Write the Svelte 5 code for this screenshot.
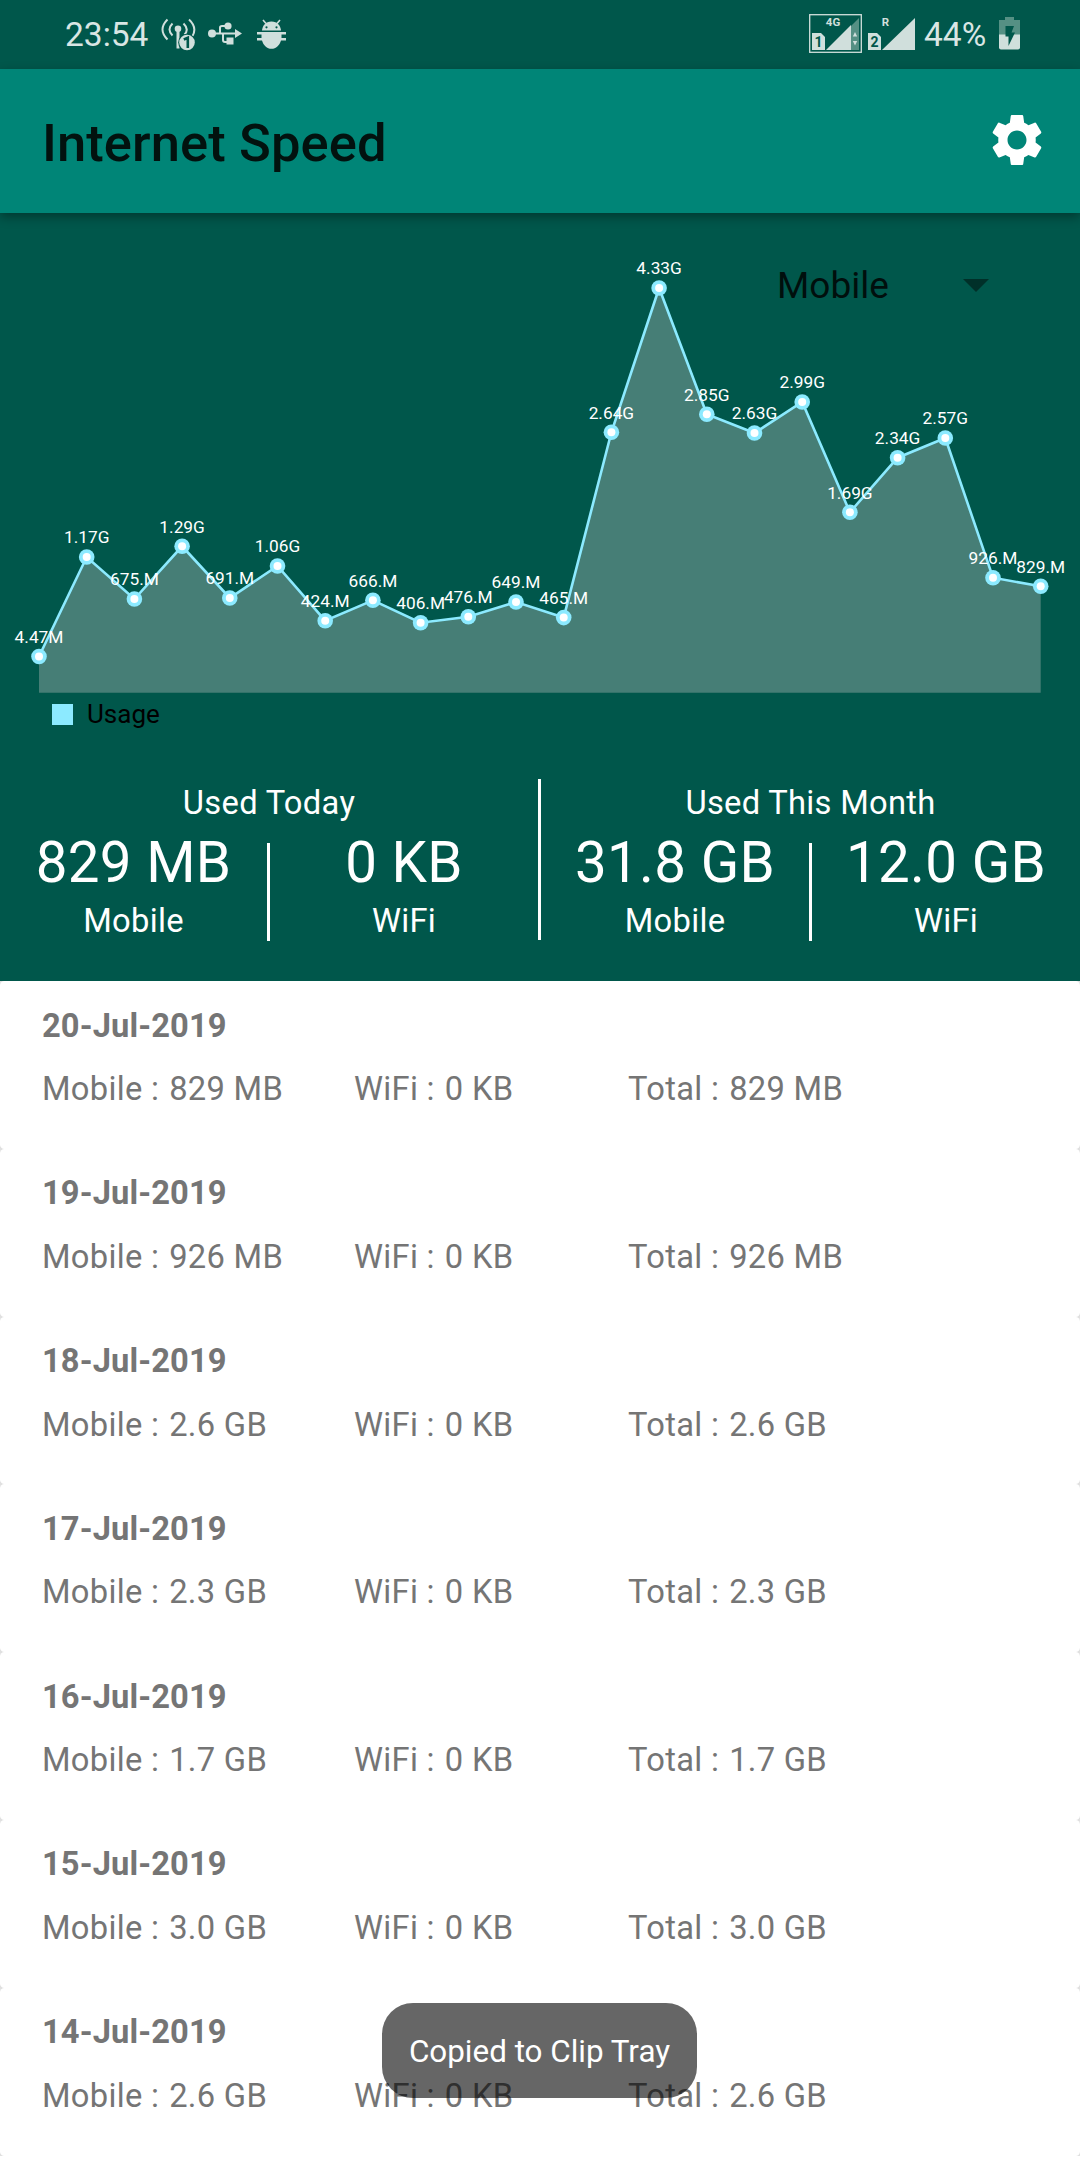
<script>
  const points = [
    [656.5, '4.47M'], [557, '1.17G'], [599, '675.M'], [546.3, '1.29G'], [598, '691.M'],
    [566, '1.06G'], [620.7, '424.M'], [600.3, '666.M'], [622.7, '406.M'], [616.7, '476.M'],
    [602, '649.M'], [617.6, '465.M'], [432.3, '2.64G'], [288, '4.33G'], [414.3, '2.85G'],
    [433, '2.63G'], [402, '2.99G'], [512.3, '1.69G'], [457.7, '2.34G'], [438, '2.57G'],
    [577.7, '926.M'], [586.3, '829.M']
  ].map(([y, label], i) => ({ x: 39 + i * 47.7, y: y - 213, label }));
  const line = points.map((p) => `${p.x},${p.y}`).join(' ');
  const area = `39,479.7 ${line} 1040.7,479.7`;

  const usage = [
    { title: 'Used Today', mobile: '829 MB', wifi: '0 KB' },
    { title: 'Used This Month', mobile: '31.8 GB', wifi: '12.0 GB' }
  ];
  const days = [
    ['20-Jul-2019', '829 MB'], ['19-Jul-2019', '926 MB'], ['18-Jul-2019', '2.6 GB'],
    ['17-Jul-2019', '2.3 GB'], ['16-Jul-2019', '1.7 GB'], ['15-Jul-2019', '3.0 GB'],
    ['14-Jul-2019', '2.6 GB']
  ];
</script>

<div class="screen">
  <header class="status">
    <span class="clock">23:54</span>
    <svg class="hotspot" viewBox="0 0 36 36" width="36" height="36">
      <g fill="none" stroke="#d0dfdc" stroke-width="2">
        <path d="M6.500 2.500Q-3.500 12.500 6.500 22.500M11.500 6.500Q5.500 12.500 11.500 18.500M28 2.500Q36.500 10.500 31.500 19M22.500 6.500Q28.500 12.500 23.500 17.500" />
        <path d="M17 12V31.500" stroke-width="3" />
      </g>
      <circle cx="17" cy="11.800" r="3.300" fill="#d0dfdc" />
      <circle cx="26" cy="25.500" r="8.800" fill="#00574b" />
      <circle cx="26" cy="25.500" r="7.800" fill="#d0dfdc" />
      <path d="M22.800 22.500L26.800 20.800V31" fill="none" stroke="#00574b" stroke-width="2.600" />
    </svg>
    <svg class="usb" viewBox="0 0 34 24" width="34" height="24">
      <g fill="none" stroke="#d0dfdc" stroke-width="2"><path d="M4 11.500H29M12 11.500V5.500Q12 4 14 4H20M15 11.500V18Q15 20 17 20H22" /></g>
      <g fill="#d0dfdc"><circle cx="4" cy="11.500" r="4" /><circle cx="20" cy="4" r="3.600" /><path d="M18.500 15.500h7v7h-7zM27 7L34 11.500L27 16z" /></g>
    </svg>
    <svg class="bug" viewBox="0 0 30 30" width="30" height="30">
      <path d="M5 11.500C5.500 6.500 8.500 2.500 14.500 2.500S23.500 6.500 24 11.500Z" fill="#d0dfdc" />
      <path d="M6 1L9 4.500M23 1L20 4.500" stroke="#d0dfdc" stroke-width="1.600" />
      <circle cx="9.500" cy="8.300" r="1.100" fill="#00574b" /><circle cx="19.500" cy="8.300" r="1.100" fill="#00574b" />
      <path d="M0 13H29V15.500H24.500V19H29V21.500H24C22.500 26.500 19 29.800 14.500 29.800S6.500 26.500 5 21.500H0V19H4.500V15.500H0Z" fill="#d0dfdc" />
    </svg>
    <svg class="signals" viewBox="0 0 107 40" width="107" height="40">
      <rect x="0.700" y="0.700" width="51.600" height="37.600" fill="none" stroke="#d0dfdc" stroke-width="1.300" />
      <path d="M42 12L50 4V36H42Z" fill="#559084" />
      <path d="M17 36L42 11V36ZM73 36L106 4V36Z" fill="#d0dfdc" />
      <path d="M3 19H12L16 23V36H3ZM59 19H68L72 23V36H59Z" fill="#d0dfdc" />
      <path d="M46 18L48.200 22.500H43.800ZM46 31.500L48.200 27H43.800Z" fill="#d0dfdc" />
      <g font-family="Roboto, sans-serif" font-weight="700" font-size="11.500" text-anchor="middle">
        <text x="24" y="12" fill="#d0dfdc">4G</text>
        <text x="76.500" y="12" fill="#d0dfdc">R</text>
        <text x="9.500" y="33" fill="#00574b" font-size="14">1</text>
        <text x="65.500" y="33" fill="#00574b" font-size="14">2</text>
      </g>
    </svg>
    <span class="percent">44%</span>
    <svg class="battery" viewBox="0 0 22 33" width="22" height="33">
      <path d="M6 0H15V3H21V18H0V3H6Z" fill="#559084" />
      <path d="M0 17.500H21V30.500Q21 32.500 19 32.500H2Q0 32.500 0 30.500Z" fill="#d0dfdc" />
      <path d="M6.500 9H15L12.500 15.500H16L9.500 29V19.500H6.500Z" fill="#00574b" />
    </svg>
  </header>

  <div class="appbar">
    <h1>Internet Speed</h1>
    <svg class="gear" viewBox="2 2 20 20" width="50" height="50">
      <path fill="#fff" d="M19.430 12.980c.04-.32.07-.64.07-.98s-.03-.66-.07-.98l2.110-1.650c.19-.15.24-.42.12-.64l-2-3.460c-.12-.22-.39-.3-.61-.22l-2.490 1c-.52-.4-1.080-.73-1.690-.98l-.38-2.650C14.460 2.180 14.250 2 14 2h-4c-.25 0-.46.18-.49.42l-.38 2.650c-.61.25-1.170.59-1.690.98l-2.490-1c-.23-.09-.49 0-.61.22l-2 3.460c-.13.22-.07.49.12.64l2.110 1.650c-.04.32-.07.65-.07.98s.03.66.07.98l-2.110 1.650c-.19.15-.24.42-.12.64l2 3.460c.12.22.39.3.61.22l2.490-1c.52.4 1.080.73 1.690.98l.38 2.650c.03.24.24.42.49.42h4c.25 0 .46-.18.49-.42l.38-2.650c.61-.25 1.170-.59 1.690-.98l2.490 1c.23.09.49 0 .61-.22l2-3.460c.12-.22.07-.49-.12-.64l-2.110-1.650zM12 15.800c-2.100 0-3.800-1.700-3.800-3.800s1.700-3.800 3.800-3.800 3.800 1.700 3.800 3.800-1.700 3.800-3.800 3.800z" />
    </svg>
  </div>

  <section class="summary">
    <div class="chart">
      <svg viewBox="0 0 1080 480" width="1080" height="480">
        <polygon points={area} fill="#467e76" />
        <polyline points={line} fill="none" stroke="#8ceaff" stroke-width="2.600" />
        {#each points as p}
          <circle cx={p.x} cy={p.y} r="7.800" fill="#8ceaff" />
          <circle cx={p.x} cy={p.y} r="4" fill="#fff" />
        {/each}
        {#each points as p}
          <text class="value" x={p.x} y={p.y - 13.700}>{p.label}</text>
        {/each}
      </svg>
      <div class="picker"><span>Mobile</span><i></i></div>
    </div>
    <div class="legend"><i></i><span>Usage</span></div>
    <div class="totals">
      {#each usage as group}
        <div class="group">
          <h2>{group.title}</h2>
          <div class="pair">
            <div class="stat"><strong>{group.mobile}</strong><span>Mobile</span></div>
            <div class="stat"><strong>{group.wifi}</strong><span>WiFi</span></div>
          </div>
        </div>
      {/each}
    </div>
  </section>

  <main>
    {#each days as [date, amount]}
      <article>
        <h3>{date}</h3>
        <div class="row">
          <p><span>Mobile :</span><span>{amount}</span></p>
          <p><span>WiFi :</span><span>0 KB</span></p>
          <p><span>Total :</span><span>{amount}</span></p>
        </div>
      </article>
    {/each}
  </main>
  <div class="toast">Copied to Clip Tray</div>
</div>

<style>
  :global(body) { margin: 0; }
  h1, h2, h3, p { margin: 0; }
  .screen {
    position: relative;
    width: 1080px;
    height: 2160px;
    overflow: hidden;
    display: flex;
    flex-direction: column;
    background: #fff;
    font-family: Roboto, sans-serif;
    box-sizing: border-box;
  }
  svg { display: block; flex: none; }
  .status {
    flex: none;
    height: 69px;
    background: #00574b;
    color: #d9e6e4;
    display: flex;
    align-items: flex-start;
    font-size: 33.500px;
    line-height: 40px;
    box-sizing: border-box;
    padding: 14px 59px 0 65px;
  }
  .clock, .percent { padding-top: 1px; }
  .clock { width: 84px; white-space: nowrap; }
  .hotspot { margin: 3px 0 0 12px; }
  .usb { margin: 8px 0 0 11px; }
  .bug { margin: 5px 0 0 15px; }
  .signals { margin-left: auto; }
  .percent { width: 63px; margin-left: 8px; white-space: nowrap; }
  .battery { margin: 3px 0 0 12px; }
  .appbar {
    flex: none;
    height: 144px;
    background: #008577;
    display: flex;
    justify-content: space-between;
    align-items: center;
    box-sizing: border-box;
    padding: 0 38px 0 42px;
    box-shadow: 0 4px 10px rgba(0, 0, 0, 0.35);
    z-index: 1;
  }
  .appbar h1 { font-size: 52.500px; font-weight: 500; line-height: 60px; letter-spacing: 0.1px; padding-top: 3px; color: #02120f; }
  .gear { margin-bottom: 3px; }
  .summary {
    flex: none;
    height: 768px;
    background: #00574b;
    display: flex;
    flex-direction: column;
  }
  .chart { position: relative; height: 480px; }
  .value { fill: #fff; font-size: 17.300px; text-anchor: middle; }
  .picker {
    position: absolute;
    top: 51px;
    left: 777px;
    width: 212px;
    display: flex;
    justify-content: space-between;
    align-items: center;
    font-size: 37px;
    line-height: 44px;
    color: #000f0d;
  }
  .picker i { margin-bottom: 2px; border: 13px solid transparent; border-top-color: #003029; border-bottom: 0; }
  .legend {
    display: flex;
    align-items: center;
    gap: 14px;
    height: 42px;
    padding-left: 52px;
    font-size: 26px;
    color: #000;
  }
  .legend i { width: 21px; height: 21px; background: #8ceaff; }
  .totals {
    margin-top: 44px;
    height: 161px;
    display: grid;
    grid-template-columns: 541px 539px;
    color: #fff;
  }
  .group { display: flex; flex-direction: column; box-sizing: border-box; }
  .group:first-child { border-right: 3px solid #fff; }
  .group h2 {
    font-size: 32.700px;
    font-weight: 400;
    line-height: 40px;
    letter-spacing: 0.3px;
    padding-top: 4px;
    text-align: center;
  }
  .pair { display: grid; grid-template-columns: 1fr 268px; height: 97px; margin-top: auto; }
  .stat { display: flex; flex-direction: column; align-items: center; }
  .stat:first-child { border-right: 3px solid #fff; }
  .stat strong {
    font-size: 56.500px;
    font-weight: 400;
    line-height: 56px;
    letter-spacing: 0.3px;
    margin-top: -8px;
    white-space: nowrap;
  }
  .stat span { font-size: 32.700px; line-height: 40px; letter-spacing: 0.3px; margin-top: 10px; }
  main { background: #e0e0e0; }
  article {
    height: 167.800px;
    box-sizing: border-box;
    padding: 24.500px 42px 0;
    background: #fff;
    border-radius: 4.500px;
    color: #757575;
    font-size: 32.700px;
    line-height: 40px;
    letter-spacing: 0.3px;
  }
  h3 { font-size: 32.700px; font-weight: 700; letter-spacing: 0.1px; }
  .row { display: grid; grid-template-columns: 312px 274px 1fr; margin-top: 23.500px; }
  .row p { display: flex; gap: 10px; }
  .toast {
    position: absolute;
    left: 382px;
    top: 2003px;
    width: 315px;
    height: 95px;
    border-radius: 31px;
    background: rgba(0, 0, 0, 0.6);
    color: #fff;
    font-size: 31.400px;
    line-height: 98px;
    text-align: center;
    white-space: nowrap;
  }
</style>
